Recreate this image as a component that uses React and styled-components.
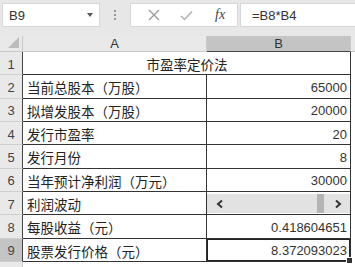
import React from 'react';
import styled, { createGlobalStyle, css } from 'styled-components';

const Global = createGlobalStyle`
  body {
    margin: 0;
    background: #e7e7e7;
    font-family: "Liberation Sans", "Noto Sans CJK SC", sans-serif;
  }
`;

const Window = styled.div`
  width: 355px;
  height: 267px;
  overflow: hidden;
  background: #e7e7e7;
`;

const FormulaBar = styled.div`
  display: flex;
  align-items: center;
  height: 24px;
  padding: 3px 0 9px 2px;
`;

const NameBox = styled.div`
  width: 98px;
  height: 24px;
  box-sizing: border-box;
  background: #fff;
  border: 1px solid #d6d6d6;
  display: flex;
  align-items: center;
  justify-content: space-between;
  padding: 0 6px 0 6px;
  font-size: 13px;
  color: #333;
`;

const Caret = styled.span`
  width: 0;
  height: 0;
  border-left: 3px solid transparent;
  border-right: 3px solid transparent;
  border-top: 4px solid #555;
`;

const Grip = styled.div`
  width: 30px;
  display: flex;
  flex-direction: column;
  align-items: center;
  gap: 2px;
  & span {
    width: 2px;
    height: 2px;
    background: #999;
  }
`;

const ActionBox = styled.div`
  width: 108px;
  height: 24px;
  box-sizing: border-box;
  background: #fff;
  border: 1px solid #d6d6d6;
  display: flex;
  align-items: center;
  padding-left: 17px;
  gap: 20px;
`;

const Fx = styled.span`
  font-family: "Liberation Serif", serif;
  font-style: italic;
  font-size: 14px;
  color: #444;
  margin-left: 2px;
`;

const FormulaInput = styled.div`
  flex: 1;
  height: 24px;
  box-sizing: border-box;
  margin-left: 2px;
  background: #fff;
  border: 1px solid #d6d6d6;
  border-right: none;
  display: flex;
  align-items: center;
  padding-left: 11px;
  font-size: 13px;
  color: #333;
`;

const Sheet = styled.div`
  display: grid;
  grid-template-columns: 23px 184px 144px 4px;
  grid-template-rows: 16px repeat(9, 23.33px) 10px;
  background: #fff;
`;

const Corner = styled.div`
  background: #e9e9e9;
  border-right: 1px solid #c9c9c9;
  border-bottom: 1px solid #c9c9c9;
  position: relative;
  &::after {
    content: '';
    position: absolute;
    right: 3px;
    bottom: 3px;
    border-left: 11px solid transparent;
    border-bottom: 11px solid #bcbcbc;
  }
`;

const ColHead = styled.div`
  background: ${p => (p.$active ? '#c4c4c4' : '#e9e9e9')};
  border-right: 1px solid #c9c9c9;
  border-bottom: 1px solid ${p => (p.$active ? '#444' : '#c9c9c9')};
  display: flex;
  align-items: center;
  justify-content: center;
  font-size: 13px;
  color: #333;
`;

const Filler = styled.div`
  background: ${p => (p.$head ? '#e9e9e9' : '#fff')};
  ${p => p.$head && css`border-bottom: 1px solid #c9c9c9;`}
`;

const RowHead = styled.div`
  background: ${p => (p.$active ? '#c4c4c4' : '#e9e9e9')};
  border-right: 1px solid ${p => (p.$edge ? '#c9c9c9' : '#444')};
  border-bottom: 1px solid #cfcfcf;
  display: flex;
  align-items: center;
  justify-content: center;
  padding-top: 2px;
  font-size: 13px;
  color: #444;
`;

const Cell = styled.div`
  position: relative;
  border-right: 1px solid #333;
  border-bottom: 1px solid #333;
  display: flex;
  align-items: center;
  padding: 2px 3px 0 4px;
  font-size: 13.5px;
  color: #222;
  white-space: nowrap;
  ${p => p.$num && css`justify-content: flex-end; color: #333; font-size: 13px;`}
  ${p => p.$center && css`justify-content: center; grid-column: span 2;`}
  ${p => p.$selected && css`
    box-shadow: inset 0 0 0 1px #222;
    &::after {
      content: '';
      position: absolute;
      right: -3px;
      bottom: -3px;
      width: 5px;
      height: 5px;
      background: #333;
      border: 1px solid #fff;
    }
  `}
`;

const Scroll = styled.div`
  border-right: 1px solid #333;
  border-bottom: 1px solid #333;
  background: #fff;
  padding: 2px 0 1px 0;
  display: flex;
`;

const Track = styled.div`
  flex: 1;
  background: #e2e2e2;
  display: flex;
  align-items: center;
  padding: 0 8px 0 9px;
  & > div {
    flex: 1;
    display: flex;
    justify-content: flex-end;
    padding-right: 10px;
    align-self: stretch;
  }
`;

const Thumb = styled.span`
  width: 7px;
  background: #b4b4b4;
`;

const Chevron = ({ dir }) => (
  <svg width="8" height="10" viewBox="0 0 8 10">
    <path
      d={dir === 'left' ? 'M6 1.5 L2 5 L6 8.5' : 'M2 1.5 L6 5 L2 8.5'}
      fill="none"
      stroke="#333"
      strokeWidth="2"
    />
  </svg>
);

const rows = [
  ['当前总股本（万股）', '65000'],
  ['拟增发股本（万股）', '20000'],
  ['发行市盈率', '20'],
  ['发行月份', '8'],
  ['当年预计净利润（万元）', '30000'],
  ['利润波动', null],
  ['每股收益（元）', '0.418604651'],
  ['股票发行价格（元）', '8.372093023'],
];

export default function App() {
  return (
    <Window>
      <Global />
      <FormulaBar>
        <NameBox>
          B9
          <Caret />
        </NameBox>
        <Grip>
          <span />
          <span />
          <span />
        </Grip>
        <ActionBox>
          <svg width="12" height="12" viewBox="0 0 12 12">
            <path d="M1 1 L11 11 M11 1 L1 11" stroke="#9a9a9a" strokeWidth="1.3" />
          </svg>
          <svg width="13" height="11" viewBox="0 0 13 11">
            <path d="M1 6 L4.5 9.5 L12 1.5" fill="none" stroke="#b0b0b0" strokeWidth="1.5" />
          </svg>
          <Fx>fx</Fx>
        </ActionBox>
        <FormulaInput>=B8*B4</FormulaInput>
      </FormulaBar>
      <Sheet>
        <Corner />
        <ColHead>A</ColHead>
        <ColHead $active>B</ColHead>
        <Filler $head />

        <RowHead>1</RowHead>
        <Cell $center>市盈率定价法</Cell>
        <Filler />

        {rows.map(([label, value], i) => {
          const n = i + 2;
          const active = n === 9;
          return (
            <React.Fragment key={n}>
              <RowHead $active={active}>{n}</RowHead>
              <Cell>{label}</Cell>
              {value === null ? (
                <Scroll>
                  <Track>
                    <Chevron dir="left" />
                    <div>
                      <Thumb />
                    </div>
                    <Chevron dir="right" />
                  </Track>
                </Scroll>
              ) : (
                <Cell $num $selected={active}>{value}</Cell>
              )}
              <Filler />
            </React.Fragment>
          );
        })}

        <RowHead $edge />
        <div />
        <div />
        <Filler />
      </Sheet>
    </Window>
  );
}
